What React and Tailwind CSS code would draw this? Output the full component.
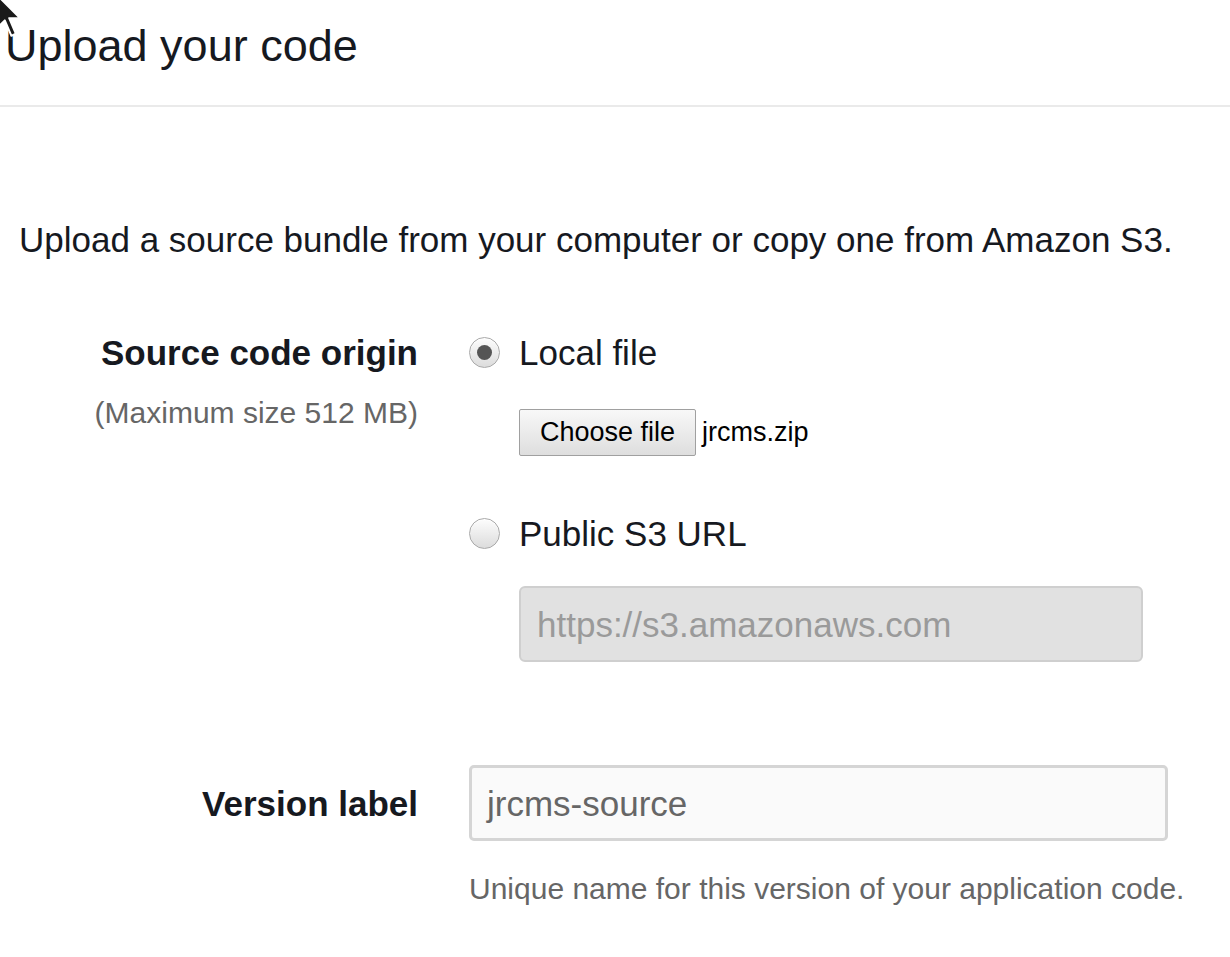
import React from "react";

const Radio = ({ checked }) => (
  <span className="w-[31px] h-[31px] rounded-full border border-[#a9a9a9] bg-gradient-to-b from-[#fdfdfd] to-[#dcdcdc] shadow-[inset_0_1px_1px_rgba(255,255,255,0.8)] flex items-center justify-center flex-shrink-0">
    {checked && <span className="w-[15px] h-[15px] rounded-full bg-[#555]" />}
  </span>
);

const Cursor = () => (
  <svg
    className="absolute left-0 top-0 pointer-events-none"
    width="40"
    height="45"
    viewBox="0 0 40 45"
  >
    <polygon
      points="-4,-6 -4,29 4.8,20.4 11.4,35.8 15.8,33.6 9.2,18.2 20.2,18.2"
      fill="#1a1a1a"
      stroke="#fff"
      strokeWidth="2"
      strokeLinejoin="round"
    />
  </svg>
);

export default function App() {
  return (
    <div className="relative min-h-[957px] bg-white text-[#16191f] font-['Liberation_Sans',Arial,sans-serif]">
      <Cursor />

      {/* Header */}
      <div className="pt-[23px] pb-[37px] pl-[5px] border-b-2 border-[#eaeaea]">
        <h1 className="text-[45px] leading-[45px] font-normal">Upload your code</h1>
      </div>

      <p className="mt-[115px] pl-[19px] text-[35px] leading-[35px]">
        Upload a source bundle from your computer or copy one from Amazon S3.
      </p>

      {/* Source code origin */}
      <div className="mt-[78px] grid grid-cols-[418px_1fr] gap-x-[51px]">
        <div className="text-right">
          <div className="text-[35px] leading-[35px] font-bold">Source code origin</div>
          <div className="mt-[28px] text-[30px] leading-[30px] text-[#666]">
            (Maximum size 512 MB)
          </div>
        </div>

        <div>
          <label className="flex items-center gap-[19px]">
            <Radio checked />
            <span className="text-[35px] leading-[35px]">Local file</span>
          </label>

          <div className="mt-[39px] ml-[50px] flex items-center gap-[6px]">
            <button className="h-[47px] px-[20px] border border-[#a0a0a0] rounded-[2px] bg-gradient-to-b from-[#f8f8f8] to-[#dedede] text-[27px] leading-none text-black">
              Choose file
            </button>
            <span className="text-[27px] leading-none text-black">jrcms.zip</span>
          </div>

          <label className="mt-[60px] flex items-center gap-[19px]">
            <Radio />
            <span className="text-[35px] leading-[35px]">Public S3 URL</span>
          </label>

          <div className="mt-[35px] ml-[50px] w-[624px] h-[76px] rounded-[6px] border-2 border-[#cfcfcf] bg-[#e1e1e1] flex items-center px-[16px]">
            <span className="text-[35px] leading-none text-[#9a9a9a]">https://s3.amazonaws.com</span>
          </div>
        </div>
      </div>

      {/* Version label */}
      <div className="mt-[103px] grid grid-cols-[418px_1fr] gap-x-[51px]">
        <div className="text-right h-[76px] flex items-center justify-end">
          <span className="text-[35px] leading-[35px] font-bold">Version label</span>
        </div>
        <div>
          <div className="w-[699px] h-[76px] rounded-[5px] border-[3px] border-[#d5d5d5] bg-[#fafafa] flex items-center px-[15px]">
            <span className="text-[35px] leading-none text-[#666]">jrcms-source</span>
          </div>
          <p className="mt-[33px] text-[30px] leading-[30px] text-[#666]">
            Unique name for this version of your application code.
          </p>
        </div>
      </div>
    </div>
  );
}
